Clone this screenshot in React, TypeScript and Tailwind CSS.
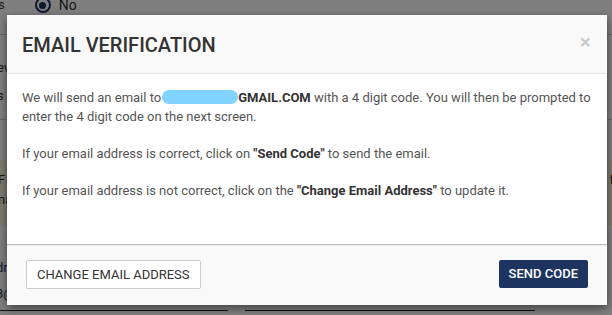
export default function App() {
  return (
    <div className="relative w-[612px] h-[315px] overflow-hidden bg-white font-['Roboto',sans-serif] text-[13px] text-[#333]">
      {/* page behind the dialog */}
      <div className="flex flex-col">
        <div className="flex items-center h-[14px] -mt-[2px]">
          <span className="-ml-[2px]">s</span>
          <span className="ml-[30px] w-[16px] h-[16px] rounded-full border-[2.5px] border-[#1d3461] flex items-center justify-center">
            <span className="w-[7px] h-[7px] rounded-full bg-[#1d3461]" />
          </span>
          <span className="ml-[8px] text-[14px]">No</span>
        </div>
        <div className="h-[23px] border-b border-[#ccc]" />
        <div className="h-[85px] border-b border-[#ccc] pl-0 pt-[19px] leading-[28px] -ml-[3px]">
          <div>ev</div>
          <div>s</div>
        </div>
        <div className="h-[40px]" />
        <div className="h-[65px] bg-[#fcf8e3] flex justify-between pt-[10px] leading-[20px]">
          <div className="-ml-[2px]">
            <div>F</div>
            <div>na</div>
          </div>
          <div className="-mr-[2px]">f</div>
        </div>
        <div className="h-[30px]" />
        <div className="leading-[26px] -ml-[4px] text-[#1d3461]">
          <div>dr</div>
          <div>3@</div>
        </div>
        <div className="flex mt-[3px]">
          <div className="w-[228px] border-b border-[#222]" />
          <div className="w-[17px]" />
          <div className="w-[290px] border-b border-[#222]" />
        </div>
      </div>

      {/* overlay */}
      <div className="absolute inset-0 bg-black/50" />

      {/* dialog */}
      <div className="absolute left-[7px] top-[15px] w-[600px] h-[290px] flex flex-col bg-[#f9f9f9] shadow-[0_3px_9px_rgba(0,0,0,0.5)]">
        <div className="h-[59px] flex items-center justify-between px-[15px] border-b border-[#e5e5e5]">
          <h4 className="text-[20px] font-medium text-[#333] mt-[1px]">EMAIL VERIFICATION</h4>
          <button className="text-[21px] font-bold leading-none text-black/20 mr-[1px] -mt-[4px]">×</button>
        </div>
        <div className="h-[170px] bg-white px-[15px] pt-[15px] leading-[18.5px] text-[#555] shadow-[0_1px_1px_rgba(0,0,0,0.25)]">
          <p>
            We will send an email to
            <span className="inline-block align-middle w-[76px] h-[14px] rounded-full bg-[#80d4ff] ml-[1px] -mt-[3px]" />
            <span className="font-bold text-[#333]">GMAIL.COM</span> with a 4 digit code. You will then be prompted to enter the 4 digit code on the next screen.
          </p>
          <p className="mt-[18.5px]">
            If your email address is correct, click on <span className="font-bold text-[#333]">"Send Code"</span> to send the email.
          </p>
          <p className="mt-[18.5px]">
            If your email address is not correct, click on the <span className="font-bold text-[#333]">"Change Email Address"</span> to update it.
          </p>
        </div>
        <div className="flex-1 flex items-start justify-between px-[19px] pt-[16px]">
          <button className="h-[29px] px-[10px] bg-white border border-[#ccc] rounded-[2px] text-[13px] text-[#333]">
            CHANGE EMAIL ADDRESS
          </button>
          <button className="h-[28px] px-[10px] bg-[#1d3461] rounded-[2px] text-[13px] font-medium text-white">
            SEND CODE
          </button>
        </div>
      </div>
    </div>
  )
}
